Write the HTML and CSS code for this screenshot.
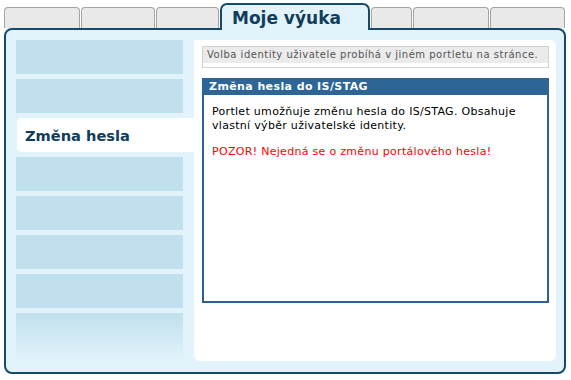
FILE: index.html
```html
<!DOCTYPE html>
<html lang="cs">
<head>
    <meta charset="UTF-8">
    <title>Moje výuka</title>
    <link rel="stylesheet" href="styles.css">
</head>
<body>
    <div class="page">
        <div class="tabs">
            <div class="tab" style="width: 76px;"></div>
            <div class="tab" style="width: 74px;"></div>
            <div class="tab" style="width: 63px;"></div>
            <div class="tab active">Moje výuka</div>
            <div class="tab" style="width: 41px;"></div>
            <div class="tab" style="width: 76px;"></div>
            <div class="tab" style="width: 75px;"></div>
        </div>
        <div class="panel">
            <ul class="menu">
                <li></li>
                <li></li>
                <li class="current">Změna hesla</li>
                <li></li>
                <li></li>
                <li></li>
                <li></li>
                <li class="fade"></li>
            </ul>
            <div class="content">
                <div class="notice">
                    <p>Volba identity uživatele probíhá v jiném portletu na stránce.</p>
                </div>
                <div class="portlet">
                    <h2>Změna hesla do IS/STAG</h2>
                    <div class="portlet-body">
                        <p>Portlet umožňuje změnu hesla do IS/STAG. Obsahuje vlastní výběr uživatelské identity.</p>
                        <p class="warning">POZOR! Nejedná se o změnu portálového hesla!</p>
                    </div>
                </div>
            </div>
        </div>
    </div>
</body>
</html>
```

FILE: styles.css
```css
body {
    margin: 0;
    font-family: "DejaVu Sans", Verdana, sans-serif;
    background: #fff;
}
.page {
    width: 562px;
    padding: 3px 0 0 4px;
}
.tabs {
    display: flex;
    align-items: flex-end;
    height: 25px;
    padding-left: 0;
}
.tab {
    box-sizing: border-box;
    height: 21px;
    background: #e9e9e9;
    border: 1px solid #a4a4a4;
    border-bottom: none;
    border-radius: 4px 4px 0 0;
    margin-right: 1px;
}
.tab.active {
    position: relative;
    z-index: 1;
    width: 150px;
    height: 27px;
    margin-bottom: -2px;
    background: #e3f3fc;
    border: 2px solid #16496b;
    border-bottom: none;
    border-radius: 7px 7px 0 0;
    color: #0f3d5e;
    font-size: 17px;
    font-weight: bold;
    padding: 3px 0 0 10px;
}
.panel {
    box-sizing: border-box;
    height: 346px;
    display: flex;
    background: #e3f3fc;
    border: 2px solid #16496b;
    border-radius: 8px;
    padding: 10px 8px 11px 10px;
}
.menu {
    list-style: none;
    margin: 0;
    padding: 0;
    width: 178px;
    display: flex;
    flex-direction: column;
    gap: 5px;
}
.menu li {
    width: 167px;
    height: 34px;
    background: #c0e0ed;
}
.menu li.current {
    box-sizing: border-box;
    width: 177px;
    margin-left: 1px;
    background: #fff;
    border-radius: 5px 0 0 5px;
    color: #0f3d5e;
    font-size: 14.6px;
    font-weight: bold;
    padding: 9px 0 0 8px;
}
.menu li.fade {
    height: 48px;
    background: linear-gradient(#c0e0ed, #e3f3fc);
}
.content {
    flex: 1;
    background: #fff;
    border-radius: 0 6px 6px 6px;
    padding: 6px 7px 0 8px;
}
.notice {
    border: 1px solid #d2d2d2;
    padding-bottom: 4px;
}
.notice p {
    margin: 0;
    background: #ebebeb;
    color: #555;
    font-size: 10px;
    letter-spacing: 0.5px;
    line-height: 16px;
    padding-left: 4px;
}
.portlet {
    margin-top: 10px;
    height: 225px;
    box-sizing: border-box;
    border: 2px solid #2c5f93;
    border-top: none;
}
.portlet h2 {
    margin: 0 -2px;
    background: #2d6597;
    color: #fff;
    font-size: 11px;
    letter-spacing: 0.4px;
    line-height: 17px;
    padding-left: 7px;
}
.portlet-body {
    padding: 10px 8px;
    font-size: 11px;
    letter-spacing: 0.3px;
    line-height: 13.5px;
    color: #000;
}
.portlet-body p {
    margin: 0 0 13px;
}
.warning {
    color: #f00;
}
```
